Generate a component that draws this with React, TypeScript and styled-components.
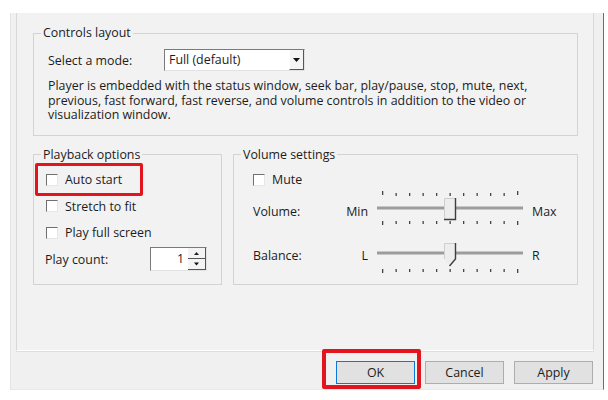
import React from 'react';
import styled, { createGlobalStyle } from 'styled-components';

const GlobalStyle = createGlobalStyle`
  html, body {
    margin: 0;
    padding: 0;
    background: #ffffff;
  }
  body {
    width: 608px;
    height: 400px;
    overflow: hidden;
    font-family: "Open Sans", "Noto Sans", sans-serif;
    font-size: 12.4px;
    color: #1c1c1c;
  }
`;

const Page = styled.div`
  width: 608px;
  height: 400px;
  padding: 13px 0 0 10px;
  box-sizing: border-box;
`;

const Dialog = styled.div`
  width: 594px;
  height: 377px;
  box-sizing: border-box;
  background: #f0f0f0;
  border-left: 1px solid #e4e4e4;
  border-right: 1px solid #6e6e6e;
  border-bottom: 1px solid #e8e8e8;
  display: flex;
  flex-direction: column;
`;

const TabPage = styled.div`
  margin-left: 5px;
  width: 578px;
  height: 338px;
  box-sizing: border-box;
  background: #f2f2f2;
  border-left: 1px solid #d8d8d8;
  border-right: 1px solid #d8d8d8;
  border-bottom: 1px solid #ffffff;
  box-shadow: 0 1px 0 #dedede;
  padding: 12px 0 0 16px;
  display: flex;
  flex-direction: column;
  gap: 11px;
`;

const Group = styled.fieldset<{ $width: number; $height?: number }>`
  margin: 0;
  min-width: 0;
  width: ${(p) => p.$width}px;
  height: ${(p) => (p.$height ? `${p.$height}px` : 'auto')};
  box-sizing: border-box;
  border: 1px solid #d3d3d3;
  padding: 0 14px 12px 14px;
`;

const Legend = styled.legend`
  margin-left: -7px;
  padding: 0 2px;
  line-height: 16px;
  color: #1c1c1c;
`;

const ModeRow = styled.div`
  margin-top: 8px;
  display: flex;
  align-items: center;
`;

const ModeLabel = styled.span`
  width: 116px;
`;

const Combo = styled.div`
  width: 141px;
  height: 22px;
  box-sizing: border-box;
  background: #ffffff;
  border-top: 1px solid #7a7a7a;
  border-left: 1px solid #7a7a7a;
  border-right: 1px solid #e2e2e2;
  border-bottom: 1px solid #e2e2e2;
  display: flex;
  align-items: stretch;
`;

const ComboText = styled.span`
  flex: 1;
  padding-left: 4px;
  line-height: 20px;
`;

const ArrowButton = styled.span`
  width: 15px;
  box-sizing: border-box;
  background: #f4f4f4;
  border-left: 1px solid #ffffff;
  border-right: 1px solid #555555;
  border-bottom: 1px solid #555555;
  display: flex;
  align-items: center;
  justify-content: center;
`;

const Description = styled.p`
  margin: 8px 0 0 0;
  width: 510px;
  line-height: 14.5px;
`;

const LowerRow = styled.div`
  display: flex;
  gap: 11px;
`;

const CheckRow = styled.div<{ $mark?: boolean }>`
  position: relative;
  height: 20px;
  display: flex;
  align-items: center;
  gap: 7px;

  &::after {
    content: '';
    display: ${(p) => (p.$mark ? 'block' : 'none')};
    position: absolute;
    left: -11px;
    top: -7px;
    width: 108px;
    height: 33px;
    box-sizing: border-box;
    border: 3.5px solid #e3141c;
    border-radius: 2px;
  }
`;

const CheckBox = styled.span`
  width: 12px;
  height: 12px;
  box-sizing: border-box;
  background: #ffffff;
  border-top: 1px solid #6f6f6f;
  border-left: 1px solid #6f6f6f;
  border-right: 1px solid #e6e6e6;
  border-bottom: 1px solid #e6e6e6;
`;

const PlaybackBody = styled.div`
  padding-top: 7px;
  margin-left: -2px;
  display: flex;
  flex-direction: column;
  gap: 6.5px;
`;

const CountRow = styled.div`
  margin-top: -2px;
  margin-left: -1px;
  display: flex;
  align-items: center;
`;

const CountLabel = styled.span`
  width: 110px;
`;

const Spinner = styled.div`
  width: 59px;
  height: 24px;
  box-sizing: border-box;
  background: #ffffff;
  border-top: 1px solid #7a7a7a;
  border-left: 1px solid #7a7a7a;
  border-right: 1px solid #e2e2e2;
  border-bottom: 1px solid #e2e2e2;
  display: flex;
`;

const SpinValue = styled.span`
  flex: 1;
  text-align: right;
  padding-right: 4px;
  line-height: 22px;
`;

const SpinButtons = styled.span`
  width: 18px;
  display: flex;
  flex-direction: column;
`;

const SpinHalf = styled.span`
  flex: 1;
  box-sizing: border-box;
  background: #f4f4f4;
  border-right: 1px solid #555555;
  border-bottom: 1px solid #555555;
  display: flex;
  align-items: center;
  justify-content: center;
`;

const VolumeBody = styled.div`
  padding-top: 7px;
  padding-left: 5px;
  display: flex;
  flex-direction: column;
`;

const SliderRow = styled.div<{ $gapTop: number }>`
  margin-top: ${(p) => p.$gapTop}px;
  display: flex;
  align-items: center;
`;

const SliderLabel = styled.span<{ $shift: number }>`
  width: 84px;
  position: relative;
  top: ${(p) => p.$shift}px;
`;

const EndLabel = styled.span<{ $shift: number; $align: 'left' | 'right' }>`
  width: 31px;
  text-align: ${(p) => p.$align};
  position: relative;
  top: ${(p) => p.$shift}px;
`;

const Spacer = styled.span`
  width: 9px;
`;

const ButtonBar = styled.div`
  margin-top: 10px;
  padding-right: 10px;
  display: flex;
  justify-content: flex-end;
  gap: 10px;
`;

const Button = styled.button<{ $default?: boolean; $mark?: boolean }>`
  position: relative;
  width: 79px;
  height: 23px;
  margin: 0;
  padding: 0;
  box-sizing: border-box;
  font: inherit;
  color: #1c1c1c;
  background: #e1e1e1;
  border: 1px solid ${(p) => (p.$default ? '#0a78d4' : '#adadad')};

  &::after {
    content: '';
    display: ${(p) => (p.$mark ? 'block' : 'none')};
    position: absolute;
    left: -15px;
    top: -13px;
    width: 99px;
    height: 40px;
    box-sizing: border-box;
    border: 4px solid #e3141c;
    border-radius: 2px;
  }
`;

const TICKS = Array.from({ length: 11 }, (_, i) => 5 + i * 13.5);

function Trackbar({ both }: { both: boolean }) {
  const trackY = both ? 19 : 11;
  const h = both ? 40 : 32;
  const t = trackY - 10;
  return (
    <svg width={146} height={h} viewBox={`0 0 146 ${h}`}>
      {both &&
        TICKS.map((x, i) => {
          const end = i === 0 || i === TICKS.length - 1;
          return (
            <rect key={`t${i}`} x={x} y={trackY - (end ? 17 : 15)} width={1.3} height={end ? 4 : 3} fill="#444" />
          );
        })}
      {TICKS.map((x, i) => {
        const end = i === 0 || i === TICKS.length - 1;
        const y = both ? trackY + 13 : trackY + 16;
        return <rect key={`b${i}`} x={x} y={y} width={1.3} height={end ? 4 : 3} fill="#444" />;
      })}
      <rect x={0} y={trackY - 1.5} width={146} height={3} fill="#9c9c9c" />
      {both ? (
        <g>
          <rect x={67} y={t} width={12} height={22} fill="#ededed" />
          <path d={`M67.5 ${t + 22} V${t + 0.5} H78`} stroke="#cfcfcf" fill="none" />
          <path d={`M78.5 ${t} V${t + 21.5} H67`} stroke="#3e3e3e" strokeWidth={1.4} fill="none" />
        </g>
      ) : (
        <g>
          <path d={`M67 ${t} H79 V${t + 16} L73 ${t + 23} L67 ${t + 16} Z`} fill="#ededed" />
          <path d={`M67.5 ${t + 16} V${t + 0.5} H78`} stroke="#cfcfcf" fill="none" />
          <path d={`M78.5 ${t} V${t + 16} L72.5 ${t + 23}`} stroke="#3e3e3e" strokeWidth={1.4} fill="none" />
        </g>
      )}
    </svg>
  );
}

const DownArrow = ({ w = 7 }: { w?: number }) => (
  <svg width={w} height={4} viewBox="0 0 7 4">
    <path d="M0 0 H7 L3.5 4 Z" fill="#111" />
  </svg>
);

const UpArrow = () => (
  <svg width={5} height={3} viewBox="0 0 5 3">
    <path d="M0 3 H5 L2.5 0 Z" fill="#222" />
  </svg>
);

export default function App() {
  return (
    <Page>
      <GlobalStyle />
      <Dialog>
        <TabPage>
          <Group $width={545}>
            <Legend>Controls layout</Legend>
            <ModeRow>
              <ModeLabel>Select a mode:</ModeLabel>
              <Combo>
                <ComboText>Full (default)</ComboText>
                <ArrowButton>
                  <DownArrow />
                </ArrowButton>
              </Combo>
            </ModeRow>
            <Description>
              Player is embedded with the status window, seek bar, play/pause, stop, mute, next, previous, fast
              forward, fast reverse, and volume controls in addition to the video or visualization window.
            </Description>
          </Group>
          <LowerRow>
            <Group $width={189} $height={138}>
              <Legend>Playback options</Legend>
              <PlaybackBody>
                <CheckRow $mark>
                  <CheckBox />
                  <span>Auto start</span>
                </CheckRow>
                <CheckRow>
                  <CheckBox />
                  <span>Stretch to fit</span>
                </CheckRow>
                <CheckRow>
                  <CheckBox />
                  <span>Play full screen</span>
                </CheckRow>
                <CountRow>
                  <CountLabel>Play count:</CountLabel>
                  <Spinner>
                    <SpinValue>1</SpinValue>
                    <SpinButtons>
                      <SpinHalf>
                        <UpArrow />
                      </SpinHalf>
                      <SpinHalf>
                        <DownArrow w={5} />
                      </SpinHalf>
                    </SpinButtons>
                  </Spinner>
                </CountRow>
              </PlaybackBody>
            </Group>
            <Group $width={345} $height={138}>
              <Legend>Volume settings</Legend>
              <VolumeBody>
                <CheckRow>
                  <CheckBox />
                  <span>Mute</span>
                </CheckRow>
                <SliderRow $gapTop={-1}>
                  <SliderLabel $shift={3}>Volume:</SliderLabel>
                  <EndLabel $shift={3} $align="right">
                    Min
                  </EndLabel>
                  <Spacer />
                  <Trackbar both />
                  <Spacer />
                  <EndLabel $shift={3} $align="left">
                    Max
                  </EndLabel>
                </SliderRow>
                <SliderRow $gapTop={13}>
                  <SliderLabel $shift={-2}>Balance:</SliderLabel>
                  <EndLabel $shift={-2} $align="right">
                    L
                  </EndLabel>
                  <Spacer />
                  <Trackbar both={false} />
                  <Spacer />
                  <EndLabel $shift={-2} $align="left">
                    R
                  </EndLabel>
                </SliderRow>
              </VolumeBody>
            </Group>
          </LowerRow>
        </TabPage>
        <ButtonBar>
          <Button $default $mark>
            OK
          </Button>
          <Button>Cancel</Button>
          <Button>Apply</Button>
        </ButtonBar>
      </Dialog>
    </Page>
  );
}
